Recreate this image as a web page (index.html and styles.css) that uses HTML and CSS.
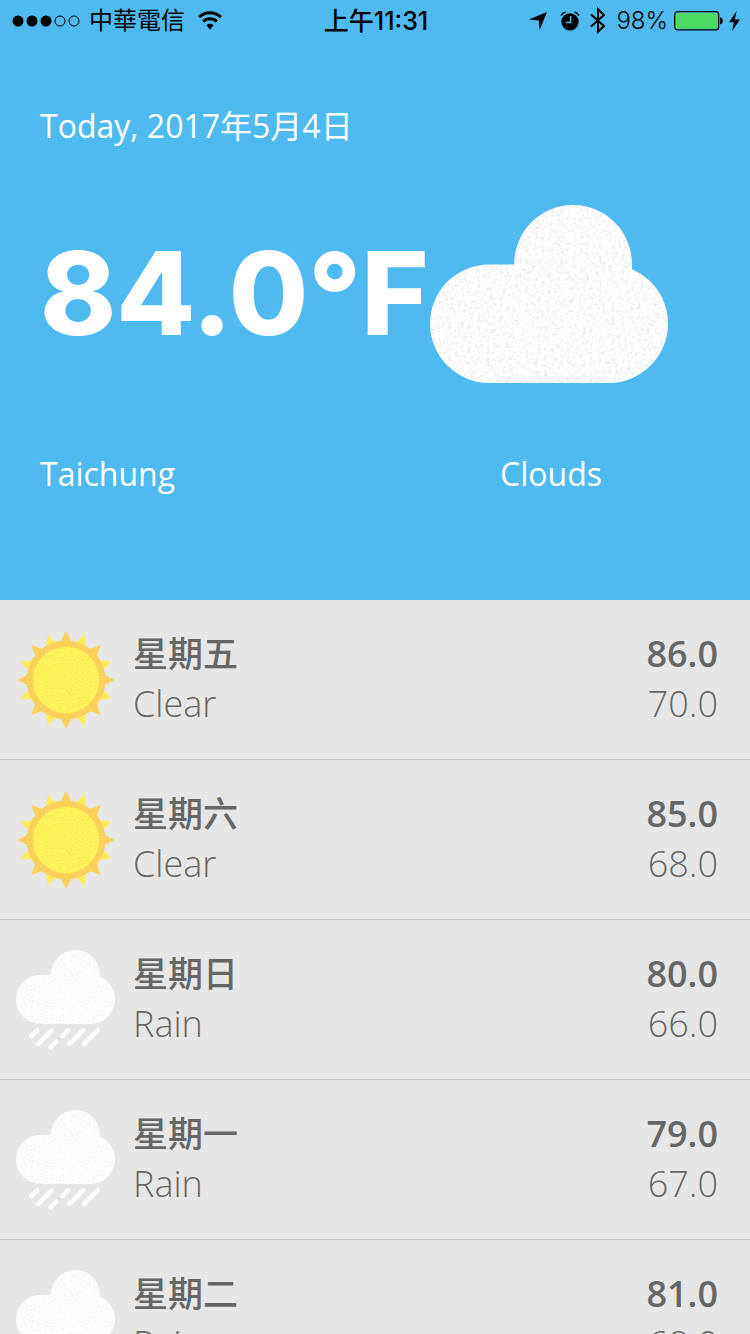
FILE: index.html
```html
<!DOCTYPE html>
<html lang="zh-Hant">
<head>
<meta charset="utf-8">
<meta name="viewport" content="width=device-width, initial-scale=1">
<title>Weather</title>
<link rel="stylesheet" href="styles.css">
</head>
<body>
<svg class="defs" aria-hidden="true">
  <defs>
    <filter id="grain" x="0" y="0" width="100%" height="100%" color-interpolation-filters="sRGB">
      <feTurbulence type="fractalNoise" baseFrequency="0.75" numOctaves="2" seed="4"/>
      <feColorMatrix values="0 0 0 0 0.5  0 0 0 0 0.5  0 0 0 0 0.5  0.45 0 0 0 -0.2"/>
      <feComposite in2="SourceAlpha" operator="in" result="noise"/>
      <feMerge><feMergeNode in="SourceGraphic"/><feMergeNode in="noise"/></feMerge>
    </filter>
    <filter id="fine-grain" x="0" y="0" width="100%" height="115%" color-interpolation-filters="sRGB">
      <feTurbulence type="fractalNoise" baseFrequency="0.6" numOctaves="2" seed="7"/>
      <feColorMatrix values="0 0 0 0 0.5  0 0 0 0 0.5  0 0 0 0 0.5  0.3 0 0 0 -0.13"/>
      <feComposite in2="SourceAlpha" operator="in" result="noise"/>
      <feMerge><feMergeNode in="SourceGraphic"/><feMergeNode in="noise"/></feMerge>
    </filter>
    <path id="ray" d="M50 1 L56 13 H44 Z"/>
    <g id="rays">
      <use href="#ray"/>
      <use href="#ray" transform="rotate(45 50 50)"/>
      <use href="#ray" transform="rotate(90 50 50)"/>
      <use href="#ray" transform="rotate(135 50 50)"/>
      <use href="#ray" transform="rotate(180 50 50)"/>
      <use href="#ray" transform="rotate(225 50 50)"/>
      <use href="#ray" transform="rotate(270 50 50)"/>
      <use href="#ray" transform="rotate(315 50 50)"/>
    </g>
    <g id="cloud-shape">
      <rect x="0" y="24.7" width="99" height="49.3" rx="24.65"/>
      <path d="M35 50 V24.5 A24.5 24.5 0 0 1 84 24.5 V50 Z"/>
    </g>
    <symbol id="sun" viewBox="0 0 100 100">
      <g filter="url(#fine-grain)">
        <use href="#rays" fill="#fff055" transform="rotate(22.5 50 50)"/>
        <use href="#rays" fill="#fdd35a"/>
        <circle cx="50" cy="50" r="39.5" fill="#fdd35a"/>
        <circle cx="50" cy="50" r="33.3" fill="#fff458"/>
      </g>
    </symbol>
    <symbol id="rain" viewBox="0 0 100 100">
      <g fill="#fff" stroke="none" filter="url(#fine-grain)">
        <use href="#cloud-shape"/>
        <path d="M15.5 86 L21 80.5 M22 94 L35.5 80.5 M34.5 97.5 L40 92 M46.5 86 L52 80.5 M53.5 94 L67 80.5 M68 94 L81.5 80.5" stroke="#fff" stroke-width="4.6" stroke-linecap="round"/>
      </g>
    </symbol>
  </defs>
</svg>

<header class="today">
  <div class="status">
    <div class="status-side">
      <svg class="signal" viewBox="0 0 68 12" aria-hidden="true">
        <circle cx="6" cy="6" r="5.5"/><circle cx="20" cy="6" r="5.5"/><circle cx="34" cy="6" r="5.5"/>
        <circle cx="48" cy="6" r="5" fill="none" stroke="#000"/><circle cx="62" cy="6" r="5" fill="none" stroke="#000"/>
      </svg>
      <span class="carrier">中華電信</span>
      <svg class="wifi" viewBox="0 0 24 19" aria-hidden="true">
        <path d="M1.2 6.2 A15.5 15.5 0 0 1 22.8 6.2" fill="none" stroke="#000" stroke-width="3"/>
        <path d="M5.2 10.6 A9.6 9.6 0 0 1 18.8 10.6" fill="none" stroke="#000" stroke-width="3"/>
        <path d="M8.4 14.2 A5.2 5.2 0 0 1 15.6 14.2 L12 18.4 Z"/>
      </svg>
    </div>
    <time class="clock">上午11:31</time>
    <div class="status-side status-end">
      <svg class="locate" viewBox="0 0 18 18" aria-hidden="true"><path d="M18 0 L10.6 18 L9.8 8.4 L0 7.4 Z"/></svg>
      <svg class="alarm" viewBox="0 0 20 20" aria-hidden="true">
        <circle cx="10" cy="10.8" r="8.6"/>
        <path d="M1 4.6 A8 8 0 0 1 5.6 1 M19 4.6 A8 8 0 0 0 14.4 1" fill="none" stroke="#000" stroke-width="1.4"/>
        <path d="M10.6 5 V11.4 H6" fill="none" stroke="#4fbaf0" stroke-width="1.5"/>
      </svg>
      <svg class="bluetooth" viewBox="0 0 16 27" aria-hidden="true"><path d="M1 7.5 L14 19 L8 24.8 V2.2 L14 8 L1 19.5" fill="none" stroke="#000" stroke-width="2"/></svg>
      <span class="percent">98%</span>
      <svg class="battery" viewBox="0 0 50 20" aria-hidden="true">
        <rect x="0.7" y="0.7" width="44" height="18.2" rx="3" fill="none" stroke="#000" stroke-width="1.2"/>
        <rect x="2" y="2" width="41.6" height="15.8" rx="2" fill="#4cd964"/>
        <path d="M46 6.5 H46.6 Q49 7.2 49 9.8 Q49 12.4 46.6 13.2 H46 Z"/>
      </svg>
      <svg class="bolt" viewBox="0 0 11 20" aria-hidden="true"><path d="M7.6 0 L0 11.2 H5 L3 20 L11 8.4 H5.8 Z"/></svg>
    </div>
  </div>

  <p class="date">Today, 2017年5月4日</p>
  <div class="current">
    <h1 class="temp">84.0°F</h1>
    <svg class="cloud" viewBox="0 0 99 74" role="img" aria-label="Clouds"><use href="#cloud-shape" fill="#fff" filter="url(#grain)"/></svg>
  </div>
  <div class="place">
    <p class="city">Taichung</p>
    <p class="condition">Clouds</p>
  </div>
</header>

<main class="forecast">
  <ul class="days">
    <li class="day">
      <svg class="icon" role="img" aria-label="Clear"><use href="#sun"/></svg>
      <div class="info"><h2 class="name">星期五</h2><p class="sky">Clear</p></div>
      <div class="range"><p class="high">86.0</p><p class="low">70.0</p></div>
    </li>
    <li class="day">
      <svg class="icon" role="img" aria-label="Clear"><use href="#sun"/></svg>
      <div class="info"><h2 class="name">星期六</h2><p class="sky">Clear</p></div>
      <div class="range"><p class="high">85.0</p><p class="low">68.0</p></div>
    </li>
    <li class="day">
      <svg class="icon" role="img" aria-label="Rain"><use href="#rain"/></svg>
      <div class="info"><h2 class="name">星期日</h2><p class="sky">Rain</p></div>
      <div class="range"><p class="high">80.0</p><p class="low">66.0</p></div>
    </li>
    <li class="day">
      <svg class="icon" role="img" aria-label="Rain"><use href="#rain"/></svg>
      <div class="info"><h2 class="name">星期一</h2><p class="sky">Rain</p></div>
      <div class="range"><p class="high">79.0</p><p class="low">67.0</p></div>
    </li>
    <li class="day">
      <svg class="icon" role="img" aria-label="Rain"><use href="#rain"/></svg>
      <div class="info"><h2 class="name">星期二</h2><p class="sky">Rain</p></div>
      <div class="range"><p class="high">81.0</p><p class="low">68.0</p></div>
    </li>
  </ul>
</main>
</body>
</html>
```

FILE: styles.css
```css
* { box-sizing: border-box; }

body {
  margin: 0;
  height: 100vh;
  display: flex;
  flex-direction: column;
  background: #e6e6e6;
  color: #666;
  font-family: "Open Sans", "Noto Sans CJK TC", sans-serif;
}

h1, h2, p, ul { margin: 0; padding: 0; }
svg { display: block; flex: none; }
.defs { position: absolute; width: 0; height: 0; }

.today {
  flex: none;
  background: #4fbaf0;
  color: #fff;
  padding-bottom: 104px;
}

.status {
  display: grid;
  grid-template-columns: 1fr auto 1fr;
  align-items: center;
  height: 41px;
  padding: 0 10px 0 12px;
  color: #000;
  font: 400 24px/40px Inter, "Noto Sans CJK TC", sans-serif;
}
.status-side { display: flex; align-items: center; gap: 9px; }
.status-end { justify-content: flex-end; gap: 10px; }
.signal { width: 68px; height: 12px; }
.wifi { width: 24px; height: 19px; margin-left: 4px; }
.clock { font-weight: 500; font-size: 25px; }
.locate { width: 18px; height: 18px; margin-right: 3px; }
.alarm { width: 20px; height: 20px; }
.bluetooth { width: 16px; height: 27px; }
.percent { font-weight: 300; }
.battery { width: 50px; height: 20px; margin-left: -4px; }
.bolt { width: 11px; height: 20px; margin-left: -5px; }

.date {
  padding: 63px 40px 0;
  font-size: 32px;
  line-height: 44px;
}
.current {
  display: flex;
  align-items: center;
  justify-content: space-between;
  height: 180px;
  margin-top: 56px;
  padding: 0 82px 0 40px;
}
.temp {
  font-family: Inter, sans-serif;
  font-weight: 800;
  font-size: 115px;
  line-height: 180px;
  white-space: nowrap;
}
.cloud { width: 238px; height: 178px; }
.place {
  display: grid;
  grid-template-columns: 1fr auto;
  margin-top: 68px;
  padding: 0 148px 0 40px;
  font-size: 32px;
  line-height: 44px;
}

.forecast { flex: 1; min-height: 0; overflow-y: auto; scrollbar-width: none; }
.days { list-style: none; }
.day {
  display: flex;
  align-items: center;
  gap: 17px;
  height: 160px;
  padding: 0 32px 0 16px;
  border-bottom: 1px solid #c8c7cc;
}
.icon { width: 100px; height: 100px; }
.info { flex: 1; }
.info, .range { padding-bottom: 2px; }
.high { font-size: 36px; line-height: 50px; font-weight: 600; }
.name { font-size: 35px; line-height: 50px; font-weight: 500; }
.sky, .low { font-size: 36px; line-height: 50px; font-weight: 300; }
.range { text-align: right; }
```
